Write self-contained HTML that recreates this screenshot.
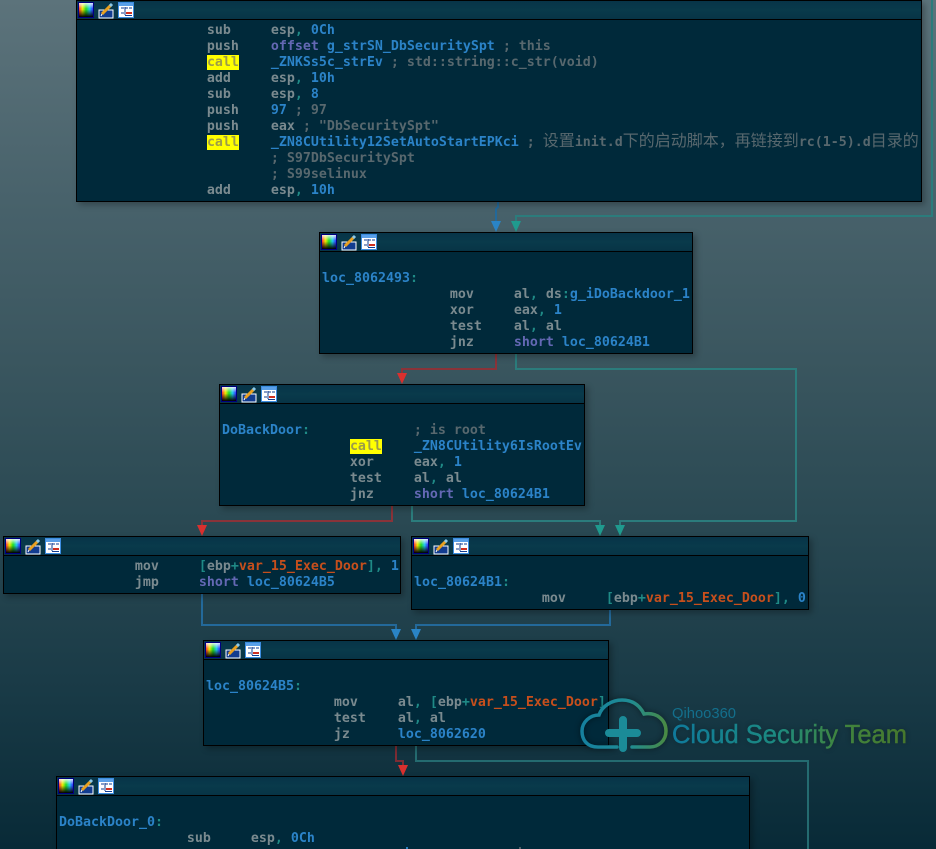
<!DOCTYPE html>
<html lang="zh">
<head>
<meta charset="utf-8">
<title>Graph</title>
<style>
html,body{margin:0;padding:0;width:936px;height:849px;overflow:hidden}
body{position:relative;background:linear-gradient(180deg,#5c737b 0,#48626b 200px,#3a565f 360px,#2a4953 520px,#1a3b47 680px,#082a37 849px);font-family:"DejaVu Sans Mono","Noto Sans CJK SC",monospace;font-size:13.29px;line-height:16px}
.n{position:absolute;box-sizing:border-box;border:1px solid #000;background:#00293a;box-shadow:3px 3px 6px rgba(0,0,0,.28);overflow:hidden}
.h{height:18px;border-bottom:1px solid #000;background:linear-gradient(180deg,#073448,#093a4b 50%,#073446);position:relative;box-sizing:content-box}
.h svg{position:absolute;left:1px;top:1px}
pre{margin:0;padding:3px 0 0 2px;font:inherit;font-weight:bold;color:#7a8a8f;white-space:pre}
i{font-style:normal}
.b{color:#2b83c8}.p{color:#6468b4}.t{color:#1f8a86}.c{color:#58686e}.o{color:#c74f1c}
.y{background:#ff0;color:#9c9c4a}
.z{font:16px/0 "Noto Sans CJK SC",sans-serif;font-weight:400;letter-spacing:0}
.e{position:absolute;left:0;top:0}
</style>
</head>
<body>
<svg class="e" width="936" height="849" fill="none" stroke-width="2">
<g stroke="#23699a">
<polyline points="498,201 498,207 496,209 496,222"/>
<polyline points="202,593 202,625 396,625 396,630"/>
<polyline points="610,609 610,625 416,625 416,630"/>
</g>
<g stroke="#2b7c7c">
<polyline points="932,0 932,216 516,216 516,222"/>
<polyline points="516,353 516,369 796,369 796,521 620,521 620,526"/>
<polyline points="412,505 412,521 600,521 600,526"/>
<polyline points="416,745 416,761 808,761 808,849" stroke="#246b70"/>
</g>
<g stroke="#8a3339">
<polyline points="496,353 496,369 402,369 402,374"/>
<polyline points="392,505 392,521 202,521 202,526"/>
<polyline points="396,745 396,761 403,761 403,766" stroke="#7d2c34"/>
</g>
<g stroke="none">
<path fill="#2a84c6" d="M491 221h10l-5 11z M391 629h10l-5 11z M411 629h10l-5 11z"/>
<path fill="#1f9a8e" d="M511 221h10l-5 11z M595 525h10l-5 11z M615 525h10l-5 11z"/>
<path fill="#d9302e" d="M397 373h10l-5 11z M197 525h10l-5 11z M398 765h10l-5 11z"/>
</g>
<defs>
<linearGradient id="rb" x1="0" x2="1" y1="0" y2="0"><stop offset="0" stop-color="#f33"/><stop offset=".25" stop-color="#ee0"/><stop offset=".5" stop-color="#2d2"/><stop offset=".75" stop-color="#2ce"/><stop offset="1" stop-color="#33f"/></linearGradient>
<linearGradient id="bk" x1="0" x2="0" y1="0" y2="1"><stop offset="0" stop-color="#fff" stop-opacity=".85"/><stop offset=".4" stop-color="#fff" stop-opacity="0"/><stop offset=".45" stop-color="#000" stop-opacity="0"/><stop offset="1" stop-color="#000"/></linearGradient>
<g id="ic">
<rect x=".5" y=".5" width="15" height="15" fill="#000" stroke="#000080"/>
<rect x="1" y="1" width="14" height="14" fill="url(#rb)"/>
<rect x="1" y="1" width="14" height="14" fill="url(#bk)"/>
<rect x="21" y="8" width="14" height="8" fill="#123c90" stroke="#fff"/>
<path d="M24 12l9-9" stroke="#e9a020" stroke-width="3"/>
<path d="M32 4l2-2" stroke="#8cc8e8" stroke-width="3"/>
<path d="M23 14l1-2" stroke="#fff" stroke-width="1"/>
<rect x="40.500" y=".5" width="15" height="15" fill="#fff" stroke="#3c8ce0"/>
<rect x="41" y="1" width="14" height="3" fill="#5aa0e8"/>
<path d="M43 6h3M47 6h3M51 6h3M47 5v8M43 11h3" stroke="#123c90" stroke-width="1"/>
<rect x="48" y="10" width="6" height="2" fill="#d03020"/>
<rect x="47" y="13" width="7" height="1" fill="#123c90"/>
</g>
</defs>
</svg>

<div class="n" style="left:76px;top:0;width:846px;height:202px"><div class="h"><svg width="60" height="17"><use href="#ic"/></svg></div>
<pre>                sub     esp<i class="t">,</i> <i class="b">0Ch</i>
                push    <i class="p">offset</i> <i class="b">g_strSN_DbSecuritySpt</i> <i class="c">; this</i>
                <i class="y">call</i>    <i class="b">_ZNKSs5c_strEv</i> <i class="c">; std::string::c_str(void)</i>
                add     esp<i class="t">,</i> <i class="b">10h</i>
                sub     esp<i class="t">,</i> <i class="b">8</i>
                push    <i class="b">97</i> <i class="c">; 97</i>
                push    eax <i class="c">; "DbSecuritySpt"</i>
                <i class="y">call</i>    <i class="b">_ZN8CUtility12SetAutoStartEPKci</i> <i class="c">; <i class="z">设置</i>init.d<i class="z">下的启动脚本，再链接到</i>rc(1-5).d<i class="z">目录的</i></i>
                <i class="c">        ; S97DbSecuritySpt</i>
                <i class="c">        ; S99selinux</i>
                add     esp<i class="t">,</i> <i class="b">10h</i></pre></div>

<div class="n" style="left:319px;top:232px;width:374px;height:122px"><div class="h"><svg width="60" height="17"><use href="#ic"/></svg></div>
<pre> 
<i class="b">loc_8062493</i><i class="t">:</i>
                mov     al<i class="t">,</i> ds<i class="t">:</i><i class="b">g_iDoBackdoor_1</i>
                xor     eax<i class="t">,</i> <i class="b">1</i>
                test    al<i class="t">,</i> al
                jnz     <i class="p">short</i> <i class="b">loc_80624B1</i></pre></div>

<div class="n" style="left:219px;top:384px;width:366px;height:122px"><div class="h"><svg width="60" height="17"><use href="#ic"/></svg></div>
<pre> 
<i class="b">DoBackDoor</i><i class="t">:</i>             <i class="c">; is root</i>
                <i class="y">call</i>    <i class="b">_ZN8CUtility6IsRootEv</i>
                xor     eax<i class="t">,</i> <i class="b">1</i>
                test    al<i class="t">,</i> al
                jnz     <i class="p">short</i> <i class="b">loc_80624B1</i></pre></div>

<div class="n" style="left:3px;top:536px;width:398px;height:58px"><div class="h"><svg width="60" height="17"><use href="#ic"/></svg></div>
<pre style="padding-left:3px">                mov     <i class="t">[</i>ebp<i class="t">+</i><i class="o">var_15_Exec_Door</i><i class="t">],</i> <i class="b">1</i>
                jmp     <i class="p">short</i> <i class="b">loc_80624B5</i></pre></div>

<div class="n" style="left:411px;top:536px;width:398px;height:74px"><div class="h"><svg width="60" height="17"><use href="#ic"/></svg></div>
<pre> 
<i class="b">loc_80624B1</i><i class="t">:</i>
                mov     <i class="t">[</i>ebp<i class="t">+</i><i class="o">var_15_Exec_Door</i><i class="t">],</i> <i class="b">0</i></pre></div>

<div class="n" style="left:203px;top:640px;width:406px;height:106px"><div class="h"><svg width="60" height="17"><use href="#ic"/></svg></div>
<pre> 
<i class="b">loc_80624B5</i><i class="t">:</i>
                mov     al<i class="t">,</i> <i class="t">[</i>ebp<i class="t">+</i><i class="o">var_15_Exec_Door</i><i class="t">]</i>
                test    al<i class="t">,</i> al
                jz      <i class="b">loc_8062620</i></pre></div>

<div class="n" style="left:56px;top:776px;width:694px;height:90px"><div class="h"><svg width="60" height="17"><use href="#ic"/></svg></div>
<pre> 
<i class="b">DoBackDoor_0</i><i class="t">:</i>
                sub     esp<i class="t">,</i> <i class="b">0Ch</i></pre></div>
<div style="position:absolute;left:406px;top:847px;width:2px;height:2px;background:#2a7fc2"></div>
<div style="position:absolute;left:519px;top:847px;width:2px;height:2px;background:#4f6068"></div>

<svg class="e" width="936" height="849" style="pointer-events:none">
<defs>
<linearGradient id="lg" gradientUnits="userSpaceOnUse" x1="580" x2="670" y1="0" y2="0"><stop offset="0" stop-color="#15809f"/><stop offset=".55" stop-color="#1f8c94"/><stop offset="1" stop-color="#4d8a3c"/></linearGradient>
<linearGradient id="tg" gradientUnits="userSpaceOnUse" x1="672" x2="907" y1="0" y2="0"><stop offset="0" stop-color="#0f7a9c"/><stop offset=".45" stop-color="#1c8a80"/><stop offset=".7" stop-color="#3f8540"/><stop offset="1" stop-color="#47782c"/></linearGradient>
<filter id="gl" x="-10%" y="-30%" width="120%" height="160%"><feGaussianBlur stdDeviation="3"/></filter>
</defs>
<g opacity=".35" filter="url(#gl)"><path d="M617 747H598C586 747 582 739 582 731C582 722 590 715 599 715C602 706 612 700 622 700C633 700 640 706 644 714C657 712 666 720 666 731C666 741 658 747 650 747H632" stroke="#000" stroke-width="5" fill="none"/></g>
<path d="M617 747H598C586 747 582 739 582 731C582 722 590 715 599 715C602 706 612 700 622 700C633 700 640 706 644 714C657 712 666 720 666 731C666 741 658 747 650 747H632" fill="none" stroke="url(#lg)" stroke-width="3.500" stroke-linecap="round"/>
<path d="M623 720v28M609 733h28" stroke="#1b8b98" stroke-width="8" stroke-linecap="round" fill="none"/>
<text x="672" y="718" font-family="Liberation Sans, sans-serif" font-size="15" fill="#136f8c" textLength="64" lengthAdjust="spacingAndGlyphs">Qihoo360</text>
<text x="672" y="743" font-family="Liberation Sans, sans-serif" font-size="26" fill="#000" opacity=".35" filter="url(#gl)" textLength="235" lengthAdjust="spacingAndGlyphs">Cloud Security Team</text>
<text x="672" y="743" font-family="Liberation Sans, sans-serif" font-size="26" fill="url(#tg)" stroke="url(#tg)" stroke-width=".4" textLength="235" lengthAdjust="spacingAndGlyphs">Cloud Security Team</text>
</svg>
</body>
</html>
